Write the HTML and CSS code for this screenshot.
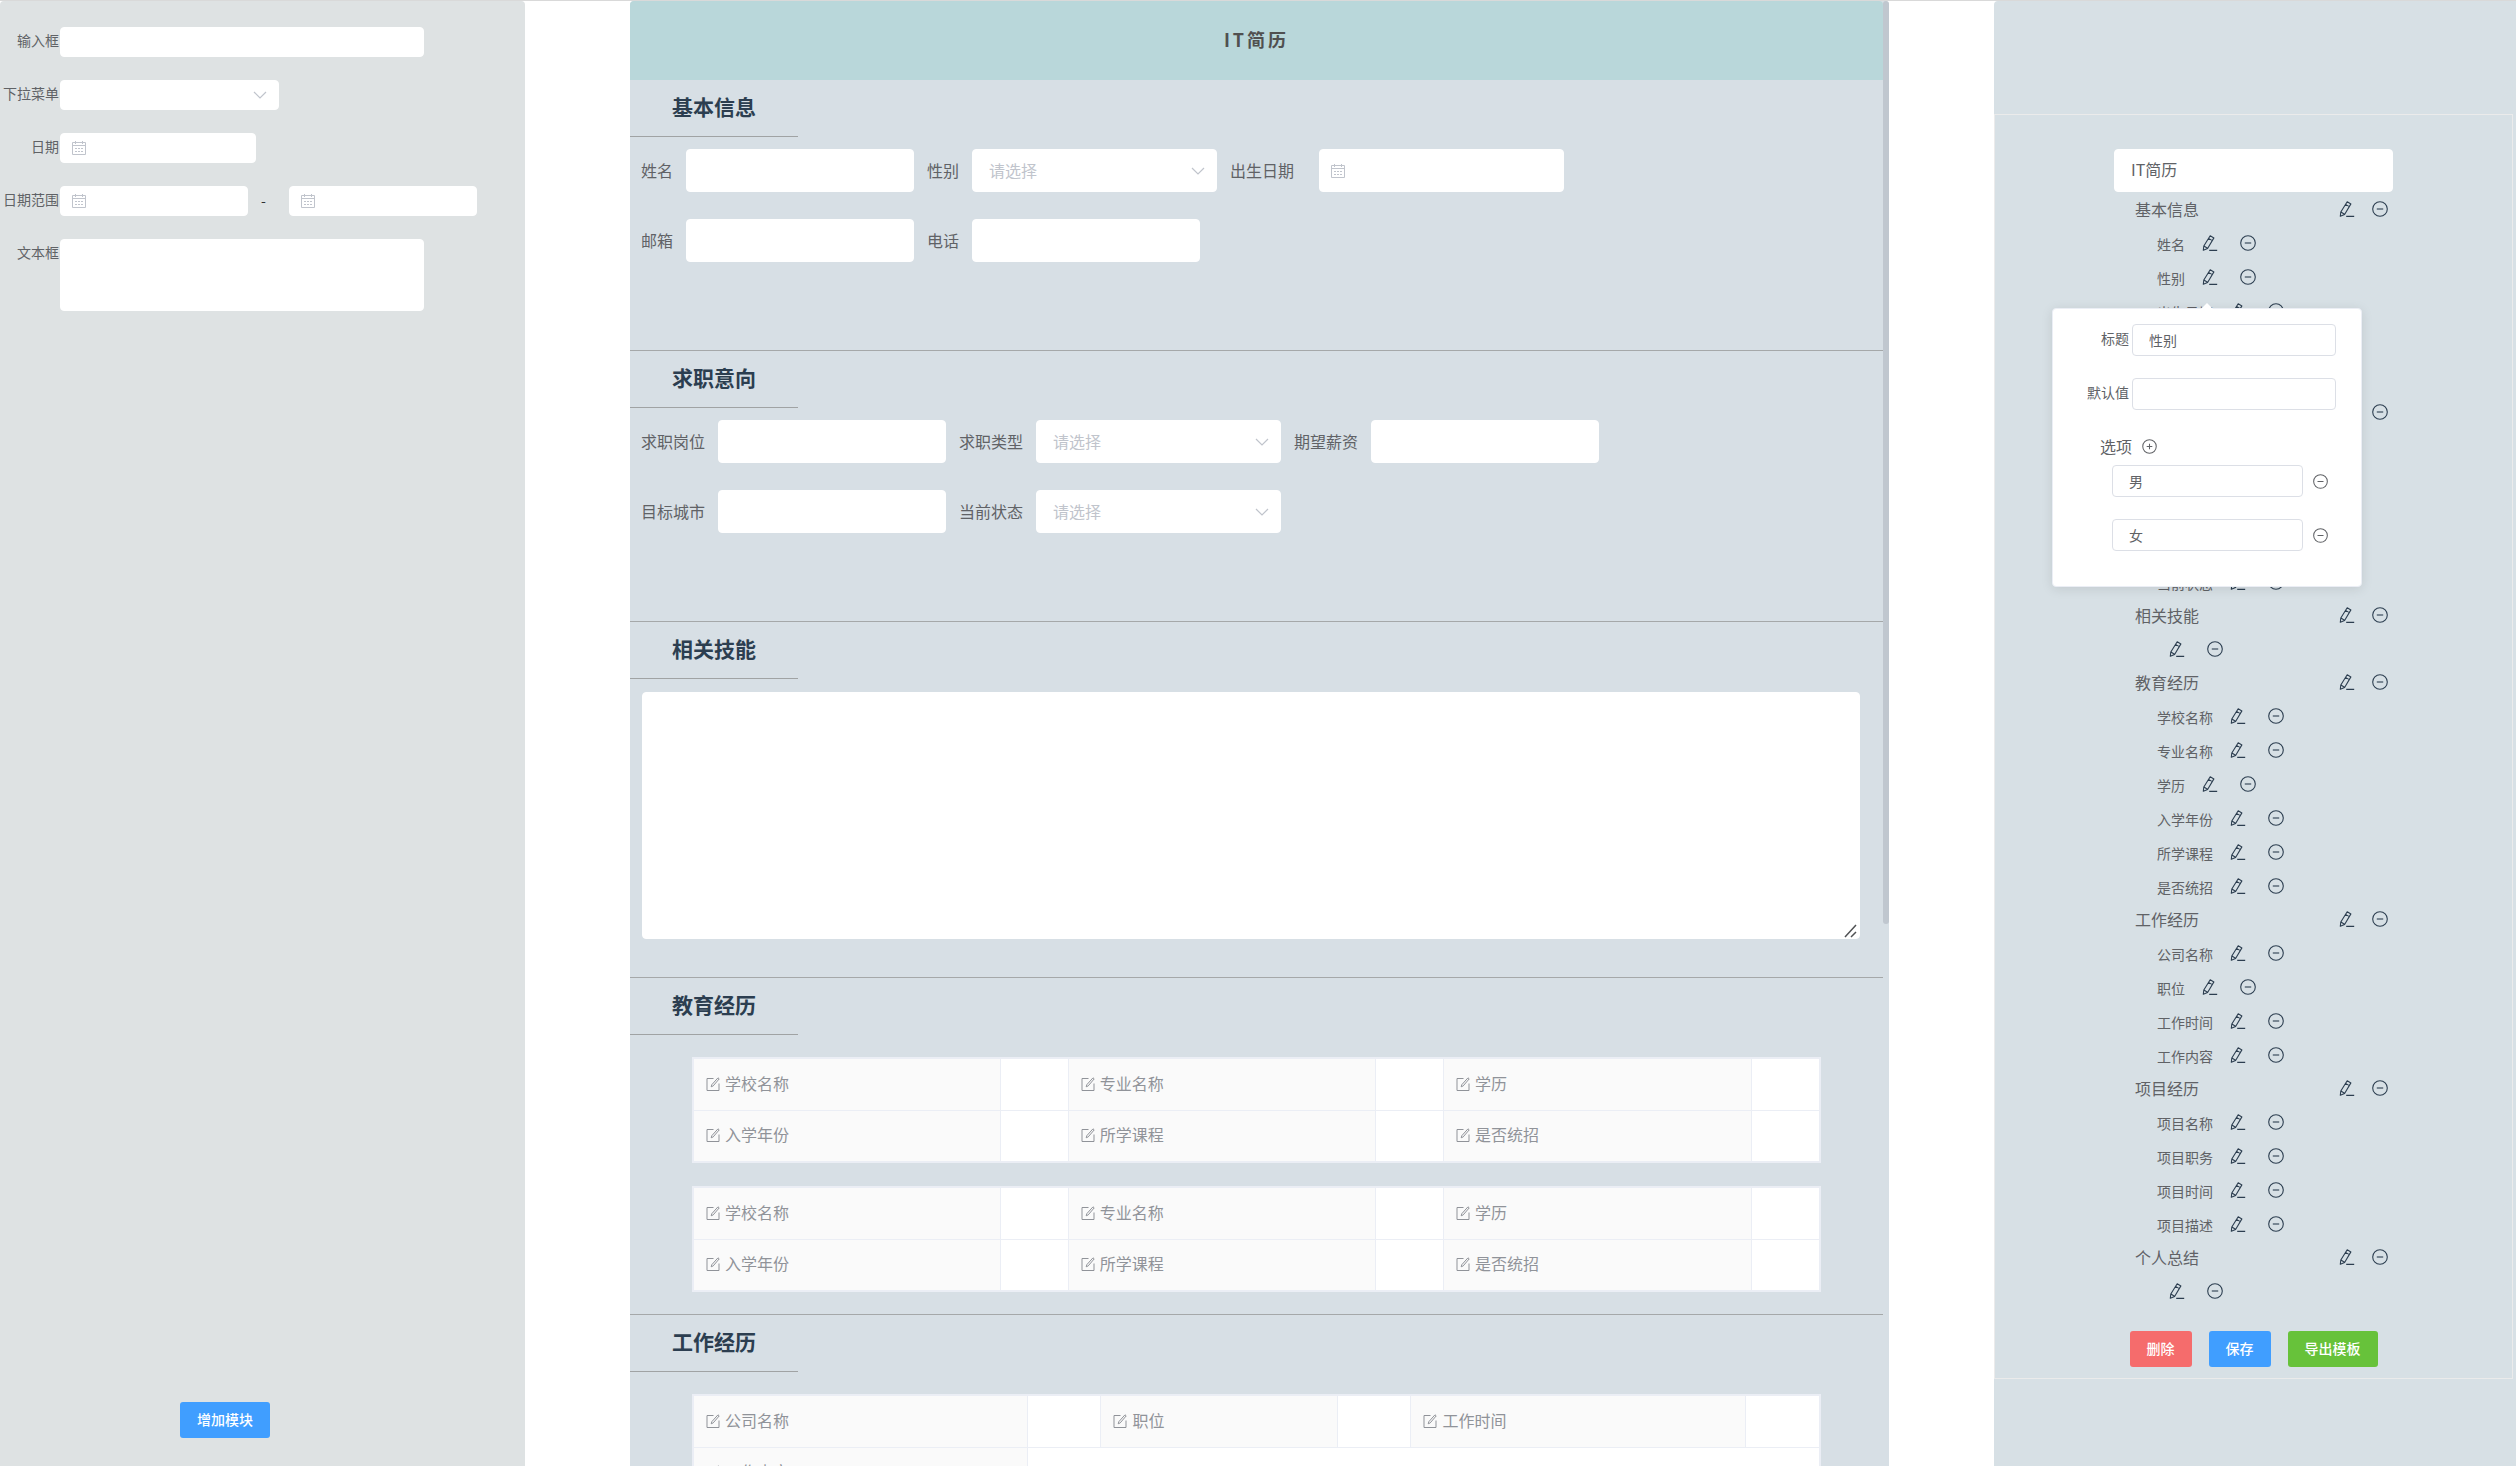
FILE: index.html
```html
<!DOCTYPE html>
<html lang="zh-CN">
<head>
<meta charset="utf-8">
<title>IT简历</title>
<link rel="stylesheet" href="styles.css">
</head>
<body>
<svg class="sprite" aria-hidden="true">
  <symbol id="pencil" viewBox="0 0 16 16"><path d="M8.2.8l3.7 2.1-6.300 10.600L1.3 15.300l.5-4.300zM6.600 3.400l3.700 2.200M1.900 11l3.600 2.200M7.200 15.400h8" fill="none" stroke="currentColor" stroke-width="1.1" stroke-linejoin="round"/></symbol>
  <symbol id="minus" viewBox="0 0 16 16"><circle cx="8" cy="8" r="7.3" fill="none" stroke="currentColor" stroke-width="1.1"/><path d="M4.8 8h6.4" stroke="currentColor" stroke-width="1.1"/></symbol>
  <symbol id="plus" viewBox="0 0 16 16"><circle cx="8" cy="8" r="7.2" fill="none" stroke="currentColor" stroke-width="1.1"/><path d="M5 8h6M8 5v6" stroke="currentColor" stroke-width="1.1"/></symbol>
  <symbol id="chevron" viewBox="0 0 14 14"><path d="M1 4l6 6 6-6" fill="none" stroke="currentColor" stroke-width="1.2"/></symbol>
  <symbol id="calendar" viewBox="0 0 14 14"><path d="M.5 1.5h13v12H.5zM.5 4.500h13M3.500 0v3M10.500 0v3M3 7.500h2M6 7.500h2M9 7.500h2M3 10.500h2M6 10.500h2M9 10.500h2" fill="none" stroke="currentColor"/></symbol>
  <symbol id="compose" viewBox="0 0 14 14"><path d="M7.500 1.500H1v12h12V6.500M12 .8l1.200 1.100-6 7-2 .9.6-2.100z" fill="none" stroke="currentColor" stroke-linejoin="round"/></symbol>
  <symbol id="grip" viewBox="0 0 14 14"><path d="M1 13L12 1M7 13l5-5" fill="none" stroke="currentColor" stroke-width="1.500"/></symbol>
</svg>

<div class="page">
  <aside class="palette">
    <form class="palette-form">
      <div class="row"><label for="p1">输入框</label><input id="p1" class="field wide" type="text"></div>
      <div class="row"><label for="p2">下拉菜单</label><span class="box medium"><select id="p2" class="field"><option></option></select><svg class="chevron"><use href="#chevron"/></svg></span></div>
      <div class="row"><label for="p3">日期</label><span class="box date"><input id="p3" class="field" type="text"><svg class="calendar"><use href="#calendar"/></svg></span></div>
      <div class="row"><label for="p4">日期范围</label><span class="box range"><input id="p4" class="field" type="text"><svg class="calendar"><use href="#calendar"/></svg></span><span class="dash">-</span><span class="box range"><input class="field" type="text" aria-label="结束日期"><svg class="calendar"><use href="#calendar"/></svg></span></div>
      <div class="row"><label for="p5">文本框</label><textarea id="p5" class="field wide area"></textarea></div>
    </form>
    <button type="button" class="btn primary add">增加模块</button>
  </aside>

  <main class="resume">
    <div class="scroller">
      <h1 class="title">IT简历</h1>

      <section class="section">
        <h2>基本信息</h2>
        <form class="form">
          <div class="line">
            <div class="item"><label for="name">姓名</label><input id="name" class="field" type="text"></div>
            <div class="item"><label for="sex">性别</label><span class="box select"><select id="sex" class="field"><option>请选择</option></select><svg class="chevron"><use href="#chevron"/></svg></span></div>
            <div class="item birth"><label for="birth">出生日期</label><span class="box select"><input id="birth" class="field" type="text"><svg class="calendar"><use href="#calendar"/></svg></span></div>
          </div>
          <div class="line">
            <div class="item"><label for="mail">邮箱</label><input id="mail" class="field" type="text"></div>
            <div class="item"><label for="tel">电话</label><input id="tel" class="field" type="text"></div>
          </div>
        </form>
      </section>

      <section class="section">
        <h2>求职意向</h2>
        <form class="form">
          <div class="line">
            <div class="item"><label for="post">求职岗位</label><input id="post" class="field" type="text"></div>
            <div class="item"><label for="kind">求职类型</label><span class="box select"><select id="kind" class="field"><option>请选择</option></select><svg class="chevron"><use href="#chevron"/></svg></span></div>
            <div class="item"><label for="pay">期望薪资</label><input id="pay" class="field" type="text"></div>
          </div>
          <div class="line">
            <div class="item"><label for="city">目标城市</label><input id="city" class="field" type="text"></div>
            <div class="item"><label for="state">当前状态</label><span class="box select"><select id="state" class="field"><option>请选择</option></select><svg class="chevron"><use href="#chevron"/></svg></span></div>
          </div>
        </form>
      </section>

      <section class="section">
        <h2>相关技能</h2>
        <div class="skills"><span class="box"><textarea aria-label="相关技能" class="field area"></textarea><svg class="grip"><use href="#grip"/></svg></span></div>
      </section>

      <section class="section">
        <h2>教育经历</h2>
        <div class="tables">
          <table class="edu">
            <colgroup><col class="k"><col class="v"><col class="k"><col class="v"><col class="k"><col></colgroup>
            <tr><th><svg><use href="#compose"/></svg>学校名称</th><td></td><th><svg><use href="#compose"/></svg>专业名称</th><td></td><th><svg><use href="#compose"/></svg>学历</th><td></td></tr>
            <tr><th><svg><use href="#compose"/></svg>入学年份</th><td></td><th><svg><use href="#compose"/></svg>所学课程</th><td></td><th><svg><use href="#compose"/></svg>是否统招</th><td></td></tr>
          </table>
          <table class="edu">
            <colgroup><col class="k"><col class="v"><col class="k"><col class="v"><col class="k"><col></colgroup>
            <tr><th><svg><use href="#compose"/></svg>学校名称</th><td></td><th><svg><use href="#compose"/></svg>专业名称</th><td></td><th><svg><use href="#compose"/></svg>学历</th><td></td></tr>
            <tr><th><svg><use href="#compose"/></svg>入学年份</th><td></td><th><svg><use href="#compose"/></svg>所学课程</th><td></td><th><svg><use href="#compose"/></svg>是否统招</th><td></td></tr>
          </table>
        </div>
      </section>

      <section class="section">
        <h2>工作经历</h2>
        <div class="tables">
          <table class="work">
            <colgroup><col class="k"><col class="v"><col class="post"><col class="v"><col class="k"><col></colgroup>
            <tr><th><svg><use href="#compose"/></svg>公司名称</th><td></td><th><svg><use href="#compose"/></svg>职位</th><td></td><th><svg><use href="#compose"/></svg>工作时间</th><td></td></tr>
            <tr><th><svg><use href="#compose"/></svg>工作内容</th><td colspan="5"></td></tr>
          </table>
        </div>
      </section>
    </div>
    <div class="thumb"></div>
  </main>

  <aside class="editor">
    <div class="card">
      <div class="outline">
        <input class="field name" type="text" value="IT简历" aria-label="模板名称">
        <div class="module"><span>基本信息</span><button type="button" class="icon" aria-label="编辑"><svg><use href="#pencil"/></svg></button><button type="button" class="icon" aria-label="删除"><svg><use href="#minus"/></svg></button></div>
        <div class="entry"><span>姓名</span><button type="button" class="icon" aria-label="编辑"><svg><use href="#pencil"/></svg></button><button type="button" class="icon" aria-label="删除"><svg><use href="#minus"/></svg></button></div>
        <div class="entry"><span>性别</span><div class="anchor"><button type="button" class="icon" aria-label="编辑"><svg><use href="#pencil"/></svg></button>
          <form class="popover">
            <div class="prop"><label for="t1">标题</label><input id="t1" class="field" type="text" value="性别"></div>
            <div class="prop"><label for="t2">默认值</label><input id="t2" class="field" type="text"></div>
            <div class="options"><span>选项</span><button type="button" class="icon" aria-label="添加选项"><svg><use href="#plus"/></svg></button></div>
            <div class="option"><input class="field" type="text" value="男" aria-label="选项一"><button type="button" class="icon" aria-label="删除选项"><svg><use href="#minus"/></svg></button></div>
            <div class="option"><input class="field" type="text" value="女" aria-label="选项二"><button type="button" class="icon" aria-label="删除选项"><svg><use href="#minus"/></svg></button></div>
          </form>
        </div><button type="button" class="icon" aria-label="删除"><svg><use href="#minus"/></svg></button></div>
        <div class="entry"><span>出生日期</span><button type="button" class="icon" aria-label="编辑"><svg><use href="#pencil"/></svg></button><button type="button" class="icon" aria-label="删除"><svg><use href="#minus"/></svg></button></div>
        <div class="entry"><span>邮箱</span><button type="button" class="icon" aria-label="编辑"><svg><use href="#pencil"/></svg></button><button type="button" class="icon" aria-label="删除"><svg><use href="#minus"/></svg></button></div>
        <div class="entry"><span>电话</span><button type="button" class="icon" aria-label="编辑"><svg><use href="#pencil"/></svg></button><button type="button" class="icon" aria-label="删除"><svg><use href="#minus"/></svg></button></div>
        <div class="module"><span>求职意向</span><button type="button" class="icon" aria-label="编辑"><svg><use href="#pencil"/></svg></button><button type="button" class="icon" aria-label="删除"><svg><use href="#minus"/></svg></button></div>
        <div class="entry"><span>求职岗位</span><button type="button" class="icon" aria-label="编辑"><svg><use href="#pencil"/></svg></button><button type="button" class="icon" aria-label="删除"><svg><use href="#minus"/></svg></button></div>
        <div class="entry"><span>求职类型</span><button type="button" class="icon" aria-label="编辑"><svg><use href="#pencil"/></svg></button><button type="button" class="icon" aria-label="删除"><svg><use href="#minus"/></svg></button></div>
        <div class="entry"><span>期望薪资</span><button type="button" class="icon" aria-label="编辑"><svg><use href="#pencil"/></svg></button><button type="button" class="icon" aria-label="删除"><svg><use href="#minus"/></svg></button></div>
        <div class="entry"><span>目标城市</span><button type="button" class="icon" aria-label="编辑"><svg><use href="#pencil"/></svg></button><button type="button" class="icon" aria-label="删除"><svg><use href="#minus"/></svg></button></div>
        <div class="entry"><span>当前状态</span><button type="button" class="icon" aria-label="编辑"><svg><use href="#pencil"/></svg></button><button type="button" class="icon" aria-label="删除"><svg><use href="#minus"/></svg></button></div>
        <div class="module"><span>相关技能</span><button type="button" class="icon" aria-label="编辑"><svg><use href="#pencil"/></svg></button><button type="button" class="icon" aria-label="删除"><svg><use href="#minus"/></svg></button></div>
        <div class="entry untitled"><span></span><button type="button" class="icon" aria-label="编辑"><svg><use href="#pencil"/></svg></button><button type="button" class="icon" aria-label="删除"><svg><use href="#minus"/></svg></button></div>
        <div class="module"><span>教育经历</span><button type="button" class="icon" aria-label="编辑"><svg><use href="#pencil"/></svg></button><button type="button" class="icon" aria-label="删除"><svg><use href="#minus"/></svg></button></div>
        <div class="entry"><span>学校名称</span><button type="button" class="icon" aria-label="编辑"><svg><use href="#pencil"/></svg></button><button type="button" class="icon" aria-label="删除"><svg><use href="#minus"/></svg></button></div>
        <div class="entry"><span>专业名称</span><button type="button" class="icon" aria-label="编辑"><svg><use href="#pencil"/></svg></button><button type="button" class="icon" aria-label="删除"><svg><use href="#minus"/></svg></button></div>
        <div class="entry"><span>学历</span><button type="button" class="icon" aria-label="编辑"><svg><use href="#pencil"/></svg></button><button type="button" class="icon" aria-label="删除"><svg><use href="#minus"/></svg></button></div>
        <div class="entry"><span>入学年份</span><button type="button" class="icon" aria-label="编辑"><svg><use href="#pencil"/></svg></button><button type="button" class="icon" aria-label="删除"><svg><use href="#minus"/></svg></button></div>
        <div class="entry"><span>所学课程</span><button type="button" class="icon" aria-label="编辑"><svg><use href="#pencil"/></svg></button><button type="button" class="icon" aria-label="删除"><svg><use href="#minus"/></svg></button></div>
        <div class="entry"><span>是否统招</span><button type="button" class="icon" aria-label="编辑"><svg><use href="#pencil"/></svg></button><button type="button" class="icon" aria-label="删除"><svg><use href="#minus"/></svg></button></div>
        <div class="module"><span>工作经历</span><button type="button" class="icon" aria-label="编辑"><svg><use href="#pencil"/></svg></button><button type="button" class="icon" aria-label="删除"><svg><use href="#minus"/></svg></button></div>
        <div class="entry"><span>公司名称</span><button type="button" class="icon" aria-label="编辑"><svg><use href="#pencil"/></svg></button><button type="button" class="icon" aria-label="删除"><svg><use href="#minus"/></svg></button></div>
        <div class="entry"><span>职位</span><button type="button" class="icon" aria-label="编辑"><svg><use href="#pencil"/></svg></button><button type="button" class="icon" aria-label="删除"><svg><use href="#minus"/></svg></button></div>
        <div class="entry"><span>工作时间</span><button type="button" class="icon" aria-label="编辑"><svg><use href="#pencil"/></svg></button><button type="button" class="icon" aria-label="删除"><svg><use href="#minus"/></svg></button></div>
        <div class="entry"><span>工作内容</span><button type="button" class="icon" aria-label="编辑"><svg><use href="#pencil"/></svg></button><button type="button" class="icon" aria-label="删除"><svg><use href="#minus"/></svg></button></div>
        <div class="module"><span>项目经历</span><button type="button" class="icon" aria-label="编辑"><svg><use href="#pencil"/></svg></button><button type="button" class="icon" aria-label="删除"><svg><use href="#minus"/></svg></button></div>
        <div class="entry"><span>项目名称</span><button type="button" class="icon" aria-label="编辑"><svg><use href="#pencil"/></svg></button><button type="button" class="icon" aria-label="删除"><svg><use href="#minus"/></svg></button></div>
        <div class="entry"><span>项目职务</span><button type="button" class="icon" aria-label="编辑"><svg><use href="#pencil"/></svg></button><button type="button" class="icon" aria-label="删除"><svg><use href="#minus"/></svg></button></div>
        <div class="entry"><span>项目时间</span><button type="button" class="icon" aria-label="编辑"><svg><use href="#pencil"/></svg></button><button type="button" class="icon" aria-label="删除"><svg><use href="#minus"/></svg></button></div>
        <div class="entry"><span>项目描述</span><button type="button" class="icon" aria-label="编辑"><svg><use href="#pencil"/></svg></button><button type="button" class="icon" aria-label="删除"><svg><use href="#minus"/></svg></button></div>
        <div class="module"><span>个人总结</span><button type="button" class="icon" aria-label="编辑"><svg><use href="#pencil"/></svg></button><button type="button" class="icon" aria-label="删除"><svg><use href="#minus"/></svg></button></div>
        <div class="entry untitled"><span></span><button type="button" class="icon" aria-label="编辑"><svg><use href="#pencil"/></svg></button><button type="button" class="icon" aria-label="删除"><svg><use href="#minus"/></svg></button></div>
      </div>
      <div class="actions">
        <button type="button" class="btn danger">删除</button>
        <button type="button" class="btn primary">保存</button>
        <button type="button" class="btn success">导出模板</button>
      </div>
    </div>
  </aside>
</div>
</body>
</html>
```

FILE: styles.css
```css
* { box-sizing: border-box; }

body {
  margin: 0;
  color: #606266;
  background: #fff;
  font: 16px/24px "Noto Sans CJK SC", sans-serif;
}

.sprite { position: absolute; width: 0; height: 0; }

.page {
  display: grid;
  grid-template-columns: 525fr 105fr 1259fr 105fr 522fr;
  height: 100vh;
  border-top: 1px solid #d9d9d9;
}

/* Shared controls */
.field {
  display: block;
  width: 100%;
  height: 100%;
  margin: 0;
  padding: 0 16px 1px;
  border: 1px solid #dcdfe6;
  border-radius: 4px;
  outline: 0;
  background: #fff;
  color: #606266;
  font: inherit;
  appearance: none;
}

.box { position: relative; display: block; height: 100%; }
.area { resize: none; }

.chevron, .calendar {
  position: absolute;
  top: 50%;
  width: 14px;
  height: 14px;
  color: #c0c4cc;
  transform: translateY(-50%);
  pointer-events: none;
}
.chevron { right: 12px; }
.calendar { left: 12px; }
.grip {
  position: absolute;
  right: 2px;
  bottom: 1px;
  width: 14px;
  height: 14px;
  color: #505254;
}

.btn {
  height: 36px;
  padding: 0 17px 2px;
  border: 0;
  border-radius: 3px;
  color: #fff;
  font: 500 14px/20px "Noto Sans CJK SC", sans-serif;
  cursor: pointer;
}
.primary { background: #409eff; }
.danger { background: #f56c6c; }
.success { background: #67c23a; }

.icon {
  display: block;
  flex: none;
  width: 16px;
  height: 16px;
  padding: 0;
  border: 0;
  background: none;
  color: #2c3e50;
  cursor: pointer;
}
.icon svg { display: block; width: 100%; height: 100%; }

/* Left: field palette */
.palette {
  grid-column: 1;
  display: flex;
  flex-direction: column;
  justify-content: space-between;
  align-items: flex-start;
  min-height: 0;
  padding: 26px 0 28px;
  border-radius: 4px 4px 0 0;
  background: #dee2e3;
  font-size: 14px;
}
.palette-form { display: flex; flex-direction: column; gap: 23px; }
.row { display: flex; height: 30px; }
.row:last-child { height: 72px; }
.row label {
  width: 60px;
  padding-right: 1px;
  line-height: 26px;
  text-align: right;
  white-space: nowrap;
}
.row .field { border-color: #fff; }
.wide { width: 364px; }
.medium { width: 219px; }
.date { width: 196px; }
.range { width: 188px; }
.dash { width: 41px; padding-right: 10px; line-height: 28px; text-align: center; color: #303133; }
.add { margin-left: 180px; }

/* Centre: resume preview */
.resume {
  grid-column: 3;
  position: relative;
  min-height: 0;
  padding-right: 6px;
  background: #d7dfe5;
  border-radius: 4px 4px 0 0;
}
.scroller { height: 100%; overflow-y: auto; scrollbar-width: none; }
.thumb {
  position: absolute;
  top: 0;
  right: 0;
  width: 6px;
  height: 63%;
  border-radius: 4px;
  background: #c0c7cf;
}
.title {
  margin: 0;
  padding-bottom: 3px;
  border-radius: 4px 4px 0 0;
  background: #b9d7da;
  color: #505050;
  font-size: 18px;
  line-height: 76px;
  letter-spacing: 3px;
  text-align: center;
}
.section + .section { border-top: 1px solid #a5a8a9; }
.section h2 {
  width: 168px;
  margin: 0;
  padding: 0 0 3px 42px;
  border-bottom: 1px solid #a0a3a4;
  color: #2c3e50;
  font-size: 21px;
  line-height: 53px;
}
.form {
  display: flex;
  flex-direction: column;
  gap: 27px;
  padding: 12px 10px 88px;
}
.line { display: flex; gap: 12px; }
.item { display: flex; height: 43px; }
.item label { padding: 0 13px 0 1px; line-height: 42px; white-space: nowrap; }
.item .field { border-color: #fff; }
.item > .field { width: 228px; }
.select { width: 245px; }
.select select { color: #c0c4cc; }
.birth label { padding-right: 25px; }

.skills { height: 298px; padding: 13px 23px 38px 12px; }
.skills .field { border-color: #fff; }

.tables {
  display: flex;
  flex-direction: column;
  gap: 23px;
  padding: 22px 62px;
}
table {
  width: 100%;
  border: 2px solid #ebeef5;
  border-collapse: collapse;
  table-layout: fixed;
  background: #fff;
  color: #909399;
}
th, td {
  height: 52px;
  padding: 0 12px 3px;
  border: 1px solid #ebeef5;
}
th { background: #fafafa; font-weight: 400; text-align: left; white-space: nowrap; }
th svg { width: 14px; height: 14px; margin-right: 5px; vertical-align: -1px; }
.edu .k { width: 27.3%; }
.edu .v { width: 6%; }
.work .k { width: 29.7%; }
.work .v { width: 6.5%; }
.work .post { width: 21%; }

/* Right: outline editor */
.editor {
  grid-column: 5;
  min-height: 0;
  padding: 113px 3px 0 0;
  border-radius: 4px 0 0 0;
  background: #d7e0e5;
}
.card { padding: 34px 0 11px; border: 1px solid #ebebeb; }
.outline { width: 279px; margin: 0 auto; }
.name { height: 43px; padding-bottom: 3px; border-color: #fff; }
.module {
  display: flex;
  align-items: center;
  gap: 17px;
  height: 33px;
  padding: 0 5px 0 21px;
}
.module span { flex: 1; }
.entry {
  display: flex;
  align-items: center;
  height: 34px;
  padding: 2px 0 0 43px;
  font-size: 14px;
}
.entry span { padding: 2px 17px 0 0; }
.entry > .icon:last-child { margin-left: 22px; }
.untitled { padding-left: 38px; }
.actions { display: flex; justify-content: center; gap: 17px; margin-top: 24px; }

/* Field settings popover */
.anchor { position: relative; }
.popover {
  position: absolute;
  z-index: 2;
  top: 39px;
  left: -150px;
  width: 310px;
  padding: 15px 25px 35px;
  border: 1px solid #ebeef5;
  border-radius: 4px;
  background: #fff;
  box-shadow: 0 2px 12px rgba(0, 0, 0, .1);
}
.popover::before {
  content: "";
  position: absolute;
  top: -6px;
  left: 148px;
  border: 6px solid transparent;
  border-top: 0;
  border-bottom-color: #fff;
}
.popover .icon { width: 15px; height: 15px; color: #606266; }
.prop { display: flex; height: 32px; margin-bottom: 22px; }
.prop label { flex: 1; padding-right: 3px; line-height: 28px; text-align: right; }
.prop .field { width: 204px; }
.options {
  display: flex;
  align-items: center;
  gap: 10px;
  height: 28px;
  margin-bottom: 5px;
  padding-left: 22px;
  font-size: 16px;
}
.popover .options span { padding: 0; }
.option { display: flex; align-items: center; gap: 10px; height: 32px; padding-left: 34px; }
.option + .option { margin-top: 22px; }
.option .field { width: 191px; }
```
